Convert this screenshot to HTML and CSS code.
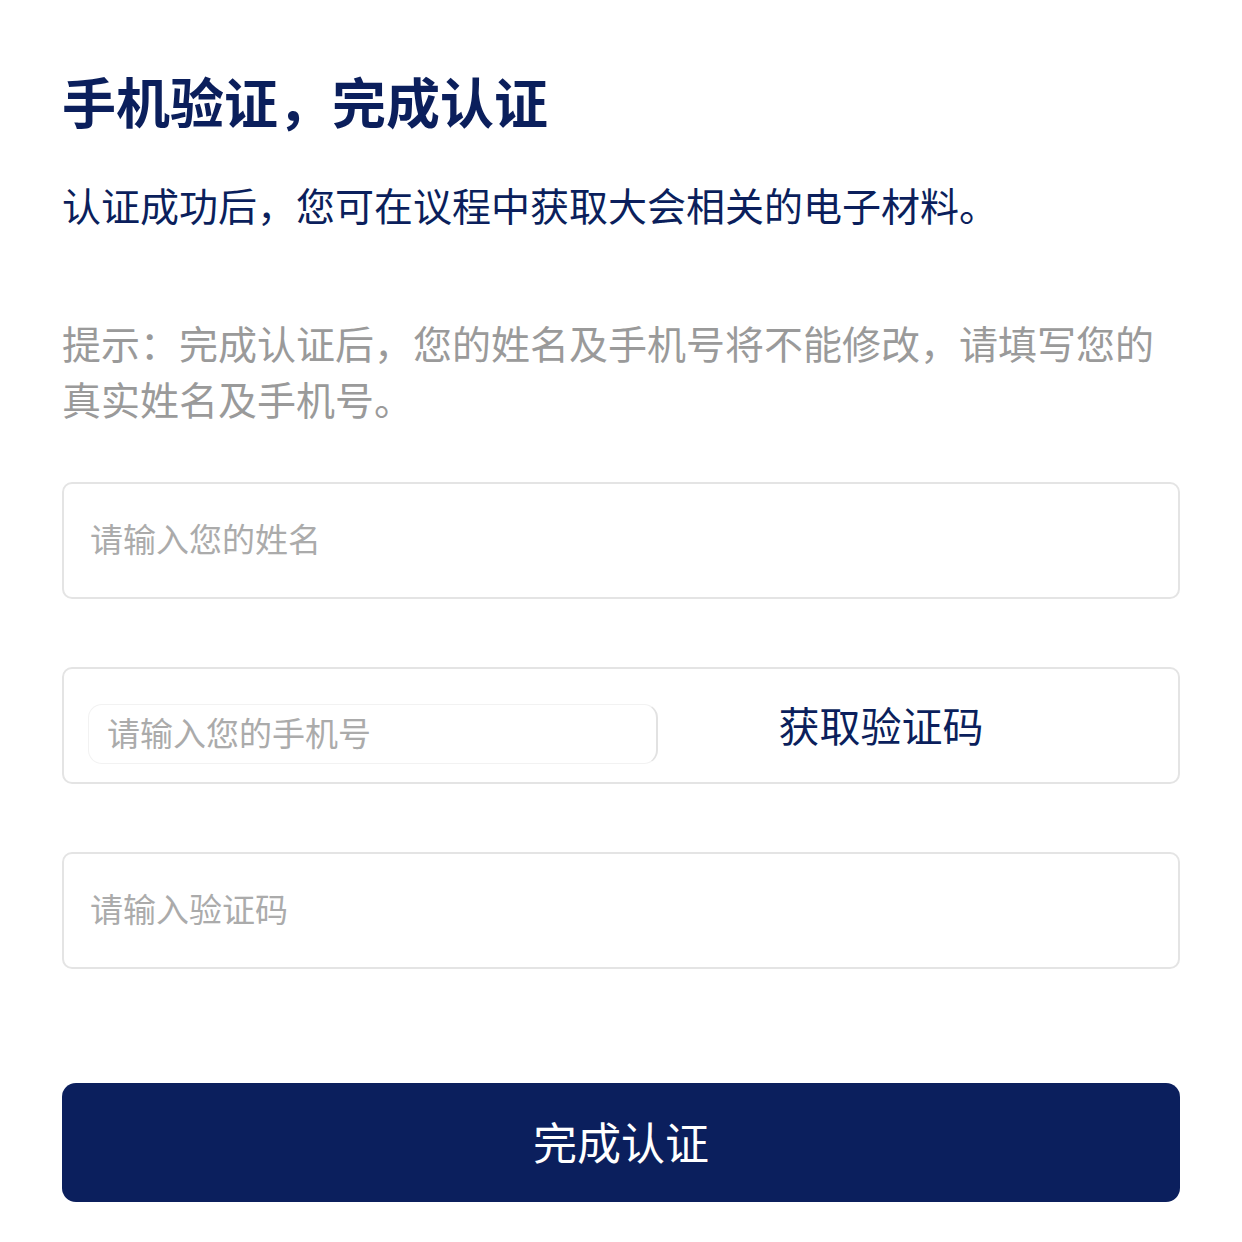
FILE: index.html
```html
<!DOCTYPE html>
<html lang="zh-CN">
<head>
<meta charset="utf-8">
<title>手机验证</title>
<link rel="stylesheet" href="styles.css">
</head>
<body>
<main class="page">
  <h1 class="title">手机验证，完成认证</h1>
  <p class="subtitle">认证成功后，您可在议程中获取大会相关的电子材料。</p>
  <p class="hint">提示：完成认证后，您的姓名及手机号将不能修改，请填写您的真实姓名及手机号。</p>
  <form class="form">
    <div class="field">
      <input class="input" type="text" placeholder="请输入您的姓名">
    </div>
    <div class="field field-row">
      <input class="input input-inner" type="tel" placeholder="请输入您的手机号">
      <button class="code-btn" type="button">获取验证码</button>
    </div>
    <div class="field">
      <input class="input" type="text" placeholder="请输入验证码">
    </div>
    <button class="submit" type="button">完成认证</button>
  </form>
</main>
</body>
</html>
```
FILE: styles.css
```css
* { box-sizing: border-box; }
html, body {
  margin: 0;
  padding: 0;
  background: #ffffff;
}
body {
  font-family: "Noto Sans CJK SC", "Noto Sans", sans-serif;
}
.page {
  padding: 65px 62px 0 62px;
  display: flex;
  flex-direction: column;
}
.title {
  margin: 0;
  font-size: 54px;
  line-height: 72px;
  font-weight: 700;
  color: #0b1f5c;
}
.subtitle {
  margin: 39px 0 0 0;
  font-size: 39px;
  line-height: 56px;
  color: #0b1f5c;
}
.hint {
  margin: 82px 0 0 0;
  font-size: 39px;
  line-height: 56px;
  color: #9a9a9a;
}
.form {
  margin-top: 56px;
  display: flex;
  flex-direction: column;
  gap: 68px;
}
.field {
  height: 117px;
  border: 2px solid #e4e4e4;
  border-radius: 10px;
  display: flex;
  align-items: center;
  background: #fff;
}
.input {
  border: none;
  outline: none;
  background: transparent;
  width: 100%;
  height: 100%;
  padding: 0 0 6px 26px;
  font-family: "Noto Sans CJK SC", "Noto Sans", sans-serif;
  font-size: 33px;
  color: #333;
}
.input::placeholder {
  color: #ababab;
}
.field-row {
  padding-left: 24px;
}
.input-inner {
  flex: 0 0 570px;
  width: 570px;
  height: 60px;
  margin-top: 16px;
  padding: 0 0 4px 18px;
  border: 1px solid #f2f2f2;
  border-right: 2px solid #e2e2e2;
  border-radius: 14px;
}
.code-btn {
  flex: 0 0 446px;
  border: none;
  background: transparent;
  font-family: "Noto Sans CJK SC", "Noto Sans", sans-serif;
  font-size: 41px;
  line-height: 56px;
  color: #0b1f5c;
  padding: 0;
  margin-bottom: 4px;
  text-align: center;
}
.submit {
  margin-top: 46px;
  height: 119px;
  border: none;
  border-radius: 14px;
  background: #0b1f5d;
  color: #ffffff;
  font-family: "Noto Sans CJK SC", "Noto Sans", sans-serif;
  font-size: 44px;
  padding-bottom: 4px;
  width: 100%;
}
```
